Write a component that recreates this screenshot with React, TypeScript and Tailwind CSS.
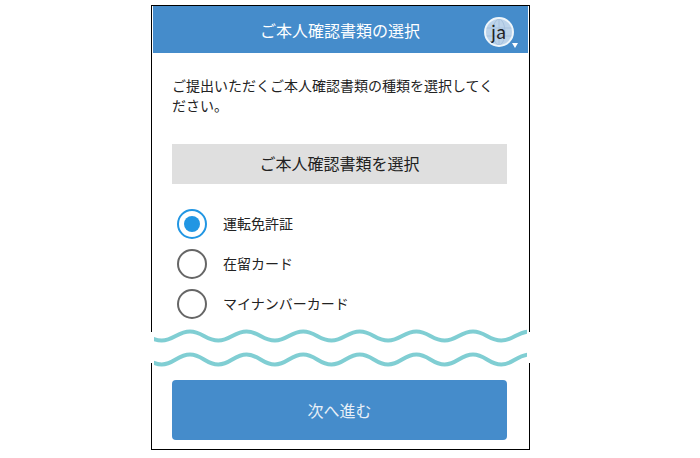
const options = ["運転免許証", "在留カード", "マイナンバーカード"];

const wavePath = (y: number, a: number) => {
  const half = 28.3;
  let x = -20.6;
  let d = `M${x} ${y - a}`;
  for (let i = 0; i < 8; i++) {
    d += ` C${x + 12} ${y - a} ${x + 16} ${y + a} ${x + half} ${y + a}`;
    d += ` C${x + half + 12} ${y + a} ${x + half + 16} ${y - a} ${x + half * 2} ${y - a}`;
    x += half * 2;
  }
  return d;
};

function Radio({ checked }: { checked: boolean }) {
  return (
    <span
      className={`flex h-[30px] w-[30px] shrink-0 items-center justify-center rounded-full border-2 ${
        checked ? "border-[#2196e3]" : "border-[#666666]"
      }`}
    >
      {checked && <span className="h-[16px] w-[16px] rounded-full bg-[#2196e3]" />}
    </span>
  );
}

export default function App() {
  return (
    <div className="h-[458px] w-[700px] overflow-hidden bg-white font-['Noto_Sans_CJK_JP','Noto_Sans',sans-serif] text-[#222222]">
      <div className="relative ml-[151px] mt-[5px] h-[445px] w-[379px] border border-black bg-white">
        {/* Header */}
        <div className="relative mx-[1px] flex h-[47px] items-center justify-center bg-[#458ccb] text-[16px] text-white">
          <span className="-ml-[1px]">ご本人確認書類の選択</span>
          <div className="absolute right-[14px] top-[11px] flex h-[30px] w-[30px] items-center justify-center overflow-hidden rounded-full border-2 border-[#eef5fa] bg-[#bcd3ea] text-[18px] text-[#222222]">
            <svg className="absolute inset-0 h-full w-full" viewBox="0 0 26 26" fill="none" stroke="#a3bedb" strokeWidth="0.8">
              <ellipse cx="13" cy="13" rx="6" ry="13" />
              <path d="M0 9h26M0 17h26M13 0v26" />
            </svg>
            <span className="relative -ml-[1px] -mt-[1px]">ja</span>
          </div>
          <div className="absolute right-[10px] top-[37px] h-0 w-0 border-x-[3.5px] border-t-[5px] border-x-transparent border-t-white" />
        </div>

        <div className="pl-[20px] pr-[22px]">
          <p className="mt-[22px] text-[14px] leading-[20px]">
            ご提出いただくご本人確認書類の種類を選択してください。
          </p>
          <div className="mt-[29px] flex h-[40px] items-center justify-center bg-[#dfdfdf] pb-[2px] text-[16px]">
            ご本人確認書類を選択
          </div>

          <div className="mt-[25px] flex flex-col gap-[10px]">
            {options.map((label, i) => (
              <div key={label} className="flex items-center gap-[16px] pl-[5px] text-[14px]">
                <Radio checked={i === 0} />
                <span className="pb-[2px]">{label}</span>
              </div>
            ))}
          </div>

          <button className="mt-[61px] flex h-[60px] w-full items-center justify-center rounded-[4px] bg-[#458ccb] text-[16px] text-[#e8f0f8]">
            次へ進む
          </button>
        </div>

        {/* Torn-page mark */}
        <svg className="absolute -left-[1px] top-[320px] h-[50px] w-[379px]" viewBox="0 0 379 50">
          <rect x="0" y="6" width="379" height="31" fill="#ffffff" />
          <svg x="3" y="0" width="373" height="50" viewBox="0 0 373 50">
            <path d={wavePath(10, 4.5)} fill="none" stroke="#80ced3" strokeWidth="4" />
            <path d={wavePath(33.5, 5)} fill="none" stroke="#80ced3" strokeWidth="4" />
          </svg>
        </svg>
      </div>
    </div>
  );
}
